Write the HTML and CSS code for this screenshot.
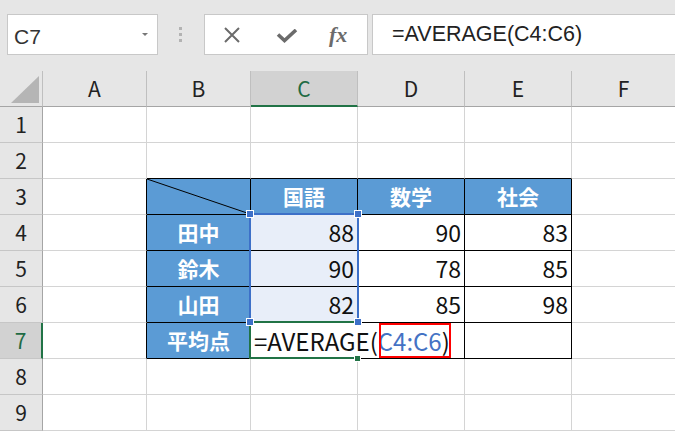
FILE: index.html
```html
<!DOCTYPE html>
<html lang="ja">
<head>
<meta charset="utf-8">
<title>AVERAGE</title>
<link rel="stylesheet" href="styles.css">
</head>
<body>
<div class="toolbar">
  <div class="namebox"><span class="name">C7</span><span class="dd"></span></div>
  <div class="grip"><i></i><i></i><i></i></div>
  <div class="fxbox">
    <svg class="ic-x" width="18" height="16" viewBox="0 0 18 16"><path d="M2 1 L16 15 M16 1 L2 15" stroke="#6b6b6b" stroke-width="2" fill="none"/></svg>
    <svg class="ic-ok" width="22" height="14" viewBox="0 0 22 14"><path d="M2 5.5 L8.5 11.5 L20 1" stroke="#6b6b6b" stroke-width="3.6" fill="none"/></svg>
    <span class="fx">fx</span>
  </div>
  <div class="formula">=AVERAGE(C4:C6)</div>
</div>
<div class="sheet">
  <div class="c corner"><span class="tri"></span></div>
  <div class="c ch">A</div><div class="c ch">B</div><div class="c ch on">C</div><div class="c ch">D</div><div class="c ch">E</div><div class="c ch last">F</div>

  <div class="c rh">1</div><div class="c"></div><div class="c"></div><div class="c"></div><div class="c"></div><div class="c"></div><div class="c last"></div>
  <div class="c rh">2</div><div class="c"></div><div class="c tt"></div><div class="c tt"></div><div class="c tt"></div><div class="c tt"></div><div class="c last"></div>
  <div class="c rh">3</div><div class="c tl"></div>
  <div class="c t blue diag"><svg viewBox="0 0 100 100" preserveAspectRatio="none"><line x1="0" y1="0" x2="100" y2="100" stroke="#000" stroke-width="1" vector-effect="non-scaling-stroke"/></svg></div>
  <div class="c t blue">国語</div><div class="c t blue">数学</div><div class="c t blue">社会</div><div class="c last"></div>

  <div class="c rh">4</div><div class="c tl"></div><div class="c t blue">田中</div><div class="c t num sel">88</div><div class="c t num">90</div><div class="c t num">83</div><div class="c last"></div>
  <div class="c rh">5</div><div class="c tl"></div><div class="c t blue">鈴木</div><div class="c t num sel">90</div><div class="c t num">78</div><div class="c t num">85</div><div class="c last"></div>
  <div class="c rh">6</div><div class="c tl"></div><div class="c t blue">山田</div><div class="c t num sel">82</div><div class="c t num">85</div><div class="c t num">98</div><div class="c last"></div>
  <div class="c rh on">7</div><div class="c tl"></div><div class="c t blue">平均点</div>
  <div class="c t edit">=AVERAGE(<span class="ref">C4:C6</span>)</div><div class="c t"></div><div class="c t"></div><div class="c last"></div>
  <div class="c rh">8</div><div class="c"></div><div class="c"></div><div class="c"></div><div class="c"></div><div class="c"></div><div class="c last"></div>
  <div class="c rh">9</div><div class="c"></div><div class="c"></div><div class="c"></div><div class="c"></div><div class="c"></div><div class="c last"></div>

  <div class="active"><span class="fill"></span></div>
  <div class="range"><i class="h tl-h"></i><i class="h tr-h"></i><i class="h bl-h"></i><i class="h br-h"></i></div>
  <div class="mark"></div>
</div>
</body>
</html>
```
FILE: styles.css
```css
* { box-sizing: border-box; }
html, body { margin: 0; padding: 0; }
body {
  width: 675px;
  height: 431px;
  overflow: hidden;
  background: #fff;
  font-family: "Noto Sans CJK JP", "Noto Sans", sans-serif;
}

/* toolbar */
.toolbar {
  display: flex;
  align-items: flex-start;
  height: 71px;
  padding: 14px 0 0 7px;
  background: #e6e6e6;
}
.namebox {
  width: 151px;
  height: 41px;
  background: #fff;
  border: 1px solid #c8c8c8;
  display: flex;
  align-items: center;
  padding: 4px 0 0 6px;
}
.name {
  flex: 1;
  font-family: "Liberation Sans", sans-serif;
  font-size: 21px;
  line-height: 1;
  color: #333;
}
.dd {
  width: 0;
  height: 0;
  border-left: 3px solid transparent;
  border-right: 3px solid transparent;
  border-top: 3px solid #777;
  margin: 0 9px 4px 0;
}
.grip {
  margin: 13px 0 0 21px;
  width: 3px;
  display: flex;
  flex-direction: column;
  gap: 3px;
}
.grip i { display: block; width: 3px; height: 3px; background: #b3b3b3; }
.fxbox {
  margin-left: 22px;
  width: 164px;
  height: 41px;
  background: #fff;
  border: 1px solid #c8c8c8;
  display: flex;
  align-items: center;
}
.ic-x { margin-left: 18px; }
.ic-ok { margin-left: 35px; margin-top: 3px; }
.fx {
  margin-left: 31px;
  font-family: "Liberation Serif", serif;
  font-style: italic;
  font-weight: bold;
  font-size: 22px;
  color: #6b6b6b;
  line-height: 1;
}
.formula {
  flex: 1;
  margin-left: 4px;
  margin-right: -10px;
  height: 41px;
  background: #fff;
  border: 1px solid #c8c8c8;
  padding: 9px 0 0 19px;
  font-family: "Liberation Sans", sans-serif;
  font-size: 21.5px;
  line-height: 1;
  color: #222;
}

/* sheet */
.sheet {
  position: relative;
  display: grid;
  grid-template-columns: 43px 104px 104px 107px 107px 107px 1fr;
  grid-template-rows: repeat(10, 36px);
}
.c {
  border-right: 1px solid #d4d4d4;
  border-bottom: 1px solid #d4d4d4;
  display: flex;
  align-items: center;
  font-size: 23px;
  line-height: 1;
  color: #111;
  white-space: nowrap;
  min-width: 0;
}
.c.last { border-right: none; }
.corner {
  background: #e6e6e6;
  border-right-color: #bfbfbf;
  border-bottom-color: #a5a5a5;
  justify-content: flex-end;
  align-items: flex-end;
  padding: 0 3px 3px 0;
}
.tri {
  width: 0;
  height: 0;
  border-left: 28px solid transparent;
  border-bottom: 27px solid #b5b5b5;
}
.ch {
  background: #e6e6e6;
  border-right-color: #bfbfbf;
  border-bottom-color: #a5a5a5;
  justify-content: center;
  font-size: 21px;
  color: #222;
}
.ch.on {
  background: #d2d2d2;
  border-bottom: 2px solid #217346;
  color: #1e6b44;
}
.rh {
  background: #e6e6e6;
  border-right-color: #a5a5a5;
  border-bottom-color: #c6c6c6;
  justify-content: center;
  font-size: 21px;
  color: #222;
}
.rh.on {
  background: #d2d2d2;
  border-right: 2px solid #217346;
  color: #1e6b44;
}
.tt { border-bottom-color: #000; }
.tl { border-right-color: #000; }
.t { border-right-color: #000; border-bottom-color: #000; }
.blue {
  background: #5b9bd5;
  color: #fff;
  font-weight: bold;
  font-size: 21px;
  justify-content: center;
}
.diag svg { display: block; width: 100%; height: 100%; }
.num { justify-content: flex-end; padding-right: 3px; }
.sel { background: #e8eef9; }
.edit {
  padding-left: 3px;
  font-size: 24px;
  overflow: visible;
  position: relative;
  z-index: 1;
  border-right-color: transparent;
}
.ref { color: #4472c4; }

/* overlays */
.active {
  position: absolute;
  grid-column: 4 / 5;
  grid-row: 8 / 9;
  top: -2px;
  left: -2px;
  right: 0;
  bottom: 0;
  border: 2px solid #217346;
  border-right: none;
  z-index: 2;
}
.fill {
  position: absolute;
  right: -3px;
  bottom: -5px;
  width: 7px;
  height: 7px;
  background: #217346;
  border: 1px solid #fff;
}
.range {
  position: absolute;
  grid-column: 4 / 5;
  grid-row: 5 / 8;
  top: -2px;
  left: -2px;
  right: -1px;
  bottom: 2px;
  border: 2px solid #3d70c8;
  border-bottom: none;
  z-index: 3;
}
.h {
  position: absolute;
  width: 8px;
  height: 8px;
  background: #3d70c8;
  border: 1px solid #fff;
}
.tl-h { left: -5px; top: -5px; }
.tr-h { right: -5px; top: -5px; }
.bl-h { left: -5px; bottom: -5px; }
.br-h { right: -5px; bottom: -5px; }
.mark {
  position: absolute;
  grid-column: 5 / 6;
  grid-row: 8 / 9;
  top: 0;
  left: 21px;
  width: 72px;
  height: 35px;
  border: 2px solid #ff0000;
  z-index: 4;
}
```
